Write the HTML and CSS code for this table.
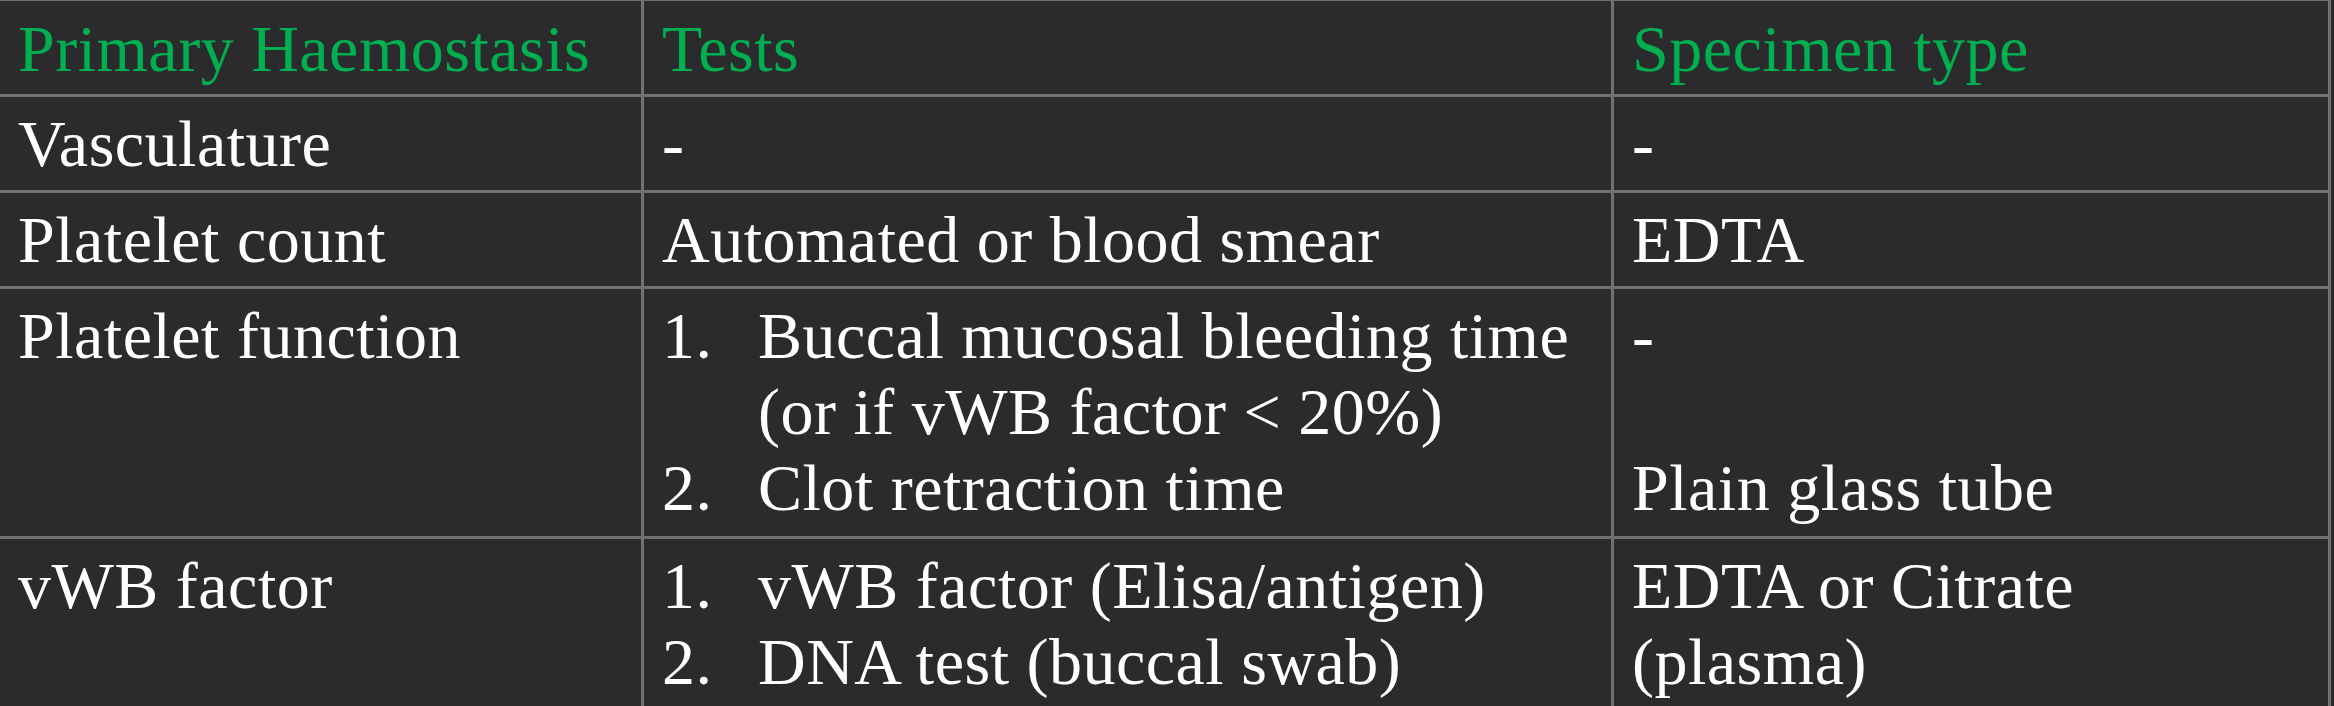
FILE: index.html
```html
<!DOCTYPE html>
<html lang="en">
<head>
<meta charset="utf-8">
<title>Primary Haemostasis</title>
<link rel="stylesheet" href="styles.css">
</head>
<body>
<div class="grid">
  <div class="cell head">Primary Haemostasis</div>
  <div class="cell head">Tests</div>
  <div class="cell head">Specimen type</div>

  <div class="cell">Vasculature</div>
  <div class="cell">-</div>
  <div class="cell">-</div>

  <div class="cell">Platelet count</div>
  <div class="cell">Automated or blood smear</div>
  <div class="cell">EDTA</div>

  <div class="cell tall">Platelet function</div>
  <div class="cell tall">
    <div class="item"><span class="num">1.</span><span class="txt">Buccal mucosal bleeding time<br>(or if vWB factor &lt; 20%)</span></div>
    <div class="item"><span class="num">2.</span><span class="txt">Clot retraction time</span></div>
  </div>
  <div class="cell tall"><div class="line">-</div><div class="line"></div><div class="line">Plain glass tube</div></div>

  <div class="cell">vWB factor</div>
  <div class="cell">
    <div class="item"><span class="num">1.</span><span class="txt">vWB factor (Elisa/antigen)</span></div>
    <div class="item"><span class="num">2.</span><span class="txt">DNA test (buccal swab)</span></div>
  </div>
  <div class="cell">EDTA or Citrate<br>(plasma)</div>
</div>
</body>
</html>
```

FILE: styles.css
```css
html, body {
  margin: 0;
  padding: 0;
}
body {
  background: #2b2b2d;
  color: #ffffff;
  font-family: "Liberation Serif", "Times New Roman", serif;
  font-size: 66px;
  line-height: 76px;
  letter-spacing: 0.5px;
  overflow: hidden;
}
.grid {
  display: grid;
  grid-template-columns: 644px 970px 717px;
  width: 2331px;
  border-top: 1px solid #717171;
}
.cell {
  box-sizing: border-box;
  padding: 9px 0 8px 18px;
  border-right: 3px solid #717171;
  border-bottom: 3px solid #717171;
  white-space: nowrap;
}
.cell.head {
  padding-top: 10px;
  padding-bottom: 7px;
  color: #00b050;
}
.cell.tall {
  padding-bottom: 10px;
}
.item {
  display: flex;
}
.num {
  flex: none;
  width: 96px;
}
.line {
  height: 76px;
}
```
